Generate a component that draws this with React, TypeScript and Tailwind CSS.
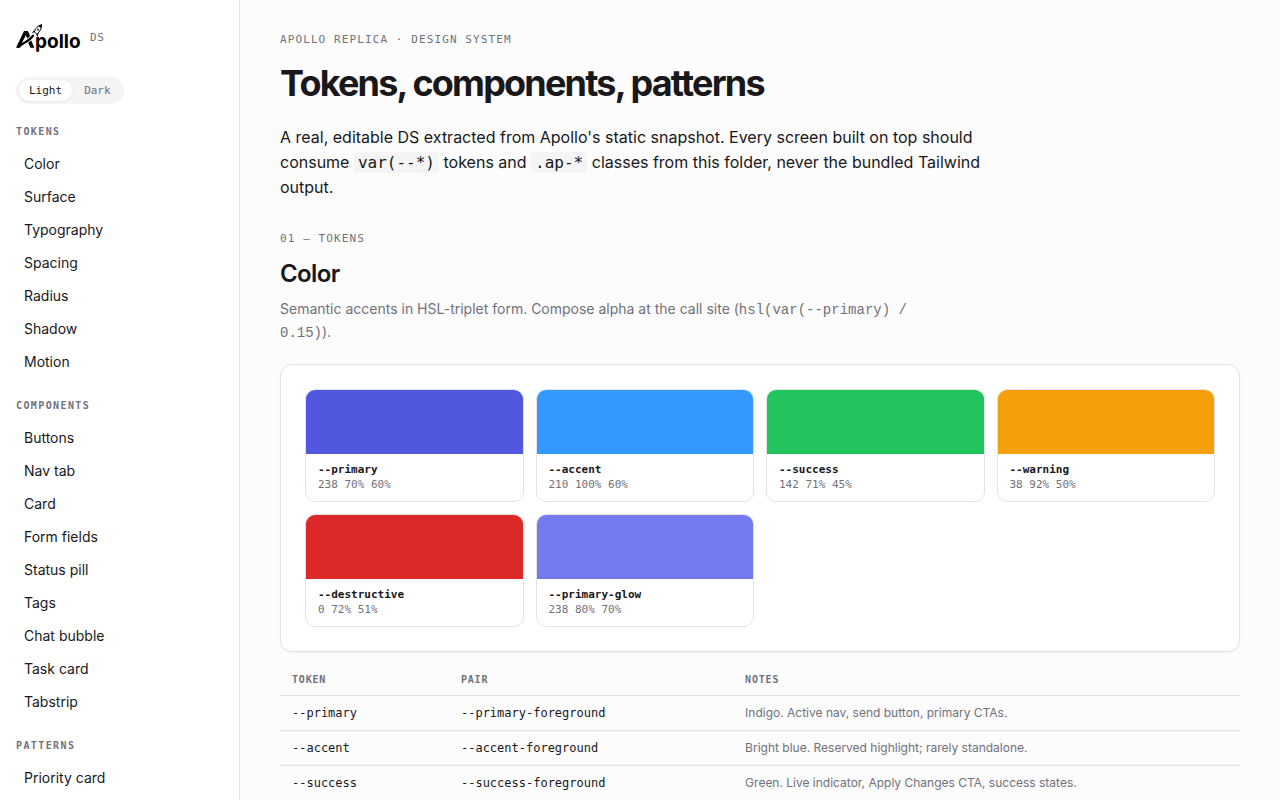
import { useState } from "react";

const mono = "font-['DejaVu_Sans_Mono',monospace]";

const navGroups = [
  {
    title: "Tokens",
    items: ["Color", "Surface", "Typography", "Spacing", "Radius", "Shadow", "Motion"],
  },
  {
    title: "Components",
    items: ["Buttons", "Nav tab", "Card", "Form fields", "Status pill", "Tags", "Chat bubble", "Task card", "Tabstrip"],
  },
  {
    title: "Patterns",
    items: ["Priority card"],
  },
];

const swatches = [
  { name: "--primary", value: "238 70% 60%", color: "bg-[#5257e0]" },
  { name: "--accent", value: "210 100% 60%", color: "bg-[#3399ff]" },
  { name: "--success", value: "142 71% 45%", color: "bg-[#21c45d]" },
  { name: "--warning", value: "38 92% 50%", color: "bg-[#f59f0a]" },
  { name: "--destructive", value: "0 72% 51%", color: "bg-[#dc2828]" },
  { name: "--primary-glow", value: "238 80% 70%", color: "bg-[#757af0]" },
];

const tokens = [
  { token: "--primary", pair: "--primary-foreground", notes: "Indigo. Active nav, send button, primary CTAs." },
  { token: "--accent", pair: "--accent-foreground", notes: "Bright blue. Reserved highlight; rarely standalone." },
  { token: "--success", pair: "--success-foreground", notes: "Green. Live indicator, Apply Changes CTA, success states." },
];

const Logo = () => (
  <svg viewBox="0 0 67 28" className="h-7 w-[67px] text-black" fill="currentColor" role="img" aria-label="Apollo">
    {/* left leg and apex */}
    <path d="M0 23.8 8 7h3.800l2.400 5-2.900 2.600-1.500-3.400L6.600 17.800 3.600 23.800Z" />
    {/* exhaust trail */}
    <path d="M1.500 23.800C4.500 18.500 11 17.500 16.800 10.300l1.700 1.400C13.500 18.800 7.500 19 3.600 23.800Z" />
    {/* right leg */}
    <path d="M12.200 18.800 15.200 16.400 18.400 23.800H14.400Z" />
    {/* rocket */}
    <path
      d="M18.300 8C19.300 4.300 22 1.600 25.600.7 25.700 4.300 24 7.600 20.900 10Z"
      fill="white"
      stroke="currentColor"
      strokeWidth="1"
      strokeLinejoin="round"
    />
    <path d="M22.600 2.400C23.600 1.400 24.700.7 26 .2c.1 1.500-.1 2.600-.5 3.900Z" />
    <circle cx="22" cy="5.700" r=".9" />
    <path d="M18.700 5.600 15.800 8.900l2-.4ZM22.700 9l-1.300 4.200-1-2.400Z" />
    <text x="19" y="24" fontSize="19" className="font-['Inter',sans-serif] font-bold">pollo</text>
  </svg>
);

const Sidebar = () => {
  const [theme, setTheme] = useState("Light");

  return (
    <aside className="w-60 shrink-0 border-r border-[#e4e4e7] bg-white px-4 pt-6">
      <div className="flex items-center gap-[7px]">
        <Logo />
        <span className={`${mono} text-[11px] leading-4 tracking-wider text-[#71717a]`}>DS</span>
      </div>
      <div className={`${mono} mt-[25px] flex w-fit gap-[2px] rounded-full bg-[#f4f4f5] p-[3px] text-[11px] leading-[13px]`}>
        {["Light", "Dark"].map((name) => (
          <button
            key={name}
            onClick={() => setTheme(name)}
            className={`rounded-full px-[10px] py-1 ${theme === name ? "bg-white text-[#18181b] shadow-xs" : "text-[#71717a]"}`}
          >
            {name}
          </button>
        ))}
      </div>
      <nav>
        {navGroups.map((group) => (
          <div key={group.title} className="mt-5">
            <h4 className={`${mono} mb-2 text-[10px] leading-[15px] font-bold tracking-[0.14em] text-[#71717a] uppercase`}>
              {group.title}
            </h4>
            {group.items.map((item) => (
              <a key={item} href="#" className="block rounded-md px-2 py-[6px] text-sm leading-[21px] hover:bg-[#f4f4f5]">
                {item}
              </a>
            ))}
          </div>
        ))}
      </nav>
    </aside>
  );
};

const ColorSection = () => (
  <section className="mt-[31px]">
    <p className={`${mono} text-[11px] leading-4 tracking-widest text-[#71717a] uppercase`}>01 — Tokens</p>
    <h2 className="mt-[11px] text-2xl leading-8 font-semibold tracking-tight">Color</h2>
    <p className="mt-2 max-w-[640px] text-sm leading-[22px] text-[#71717a]">
      Semantic accents in HSL-triplet form. Compose alpha at the call site (
      <code className="font-['Liberation_Mono',monospace]">hsl(var(--primary) / 0.15)</code>).
    </p>

    <div className="mt-5 grid grid-cols-4 gap-3 rounded-xl border border-[#e4e4e7] bg-white p-6 shadow-xs">
      {swatches.map((s) => (
        <div key={s.name} className="overflow-hidden rounded-[10px] border border-[#e4e4e7]">
          <div className={`h-16 ${s.color}`} />
          <div className={`${mono} px-3 pt-2 pb-[9px] text-[11px] leading-[15px]`}>
            <div className="font-bold">{s.name}</div>
            <div className="text-[#71717a]">{s.value}</div>
          </div>
        </div>
      ))}
    </div>

    <table className="mt-3 w-full table-fixed text-left text-xs leading-[18px]">
      <colgroup>
        <col className="w-[17.6%]" />
        <col className="w-[29.6%]" />
        <col />
      </colgroup>
      <thead>
        <tr className={`${mono} border-b border-[#e4e4e7] text-[10px] leading-[15px] tracking-[0.08em] text-[#71717a] uppercase`}>
          <th className="px-3 py-2">Token</th>
          <th className="px-3 py-2">Pair</th>
          <th className="px-3 py-2">Notes</th>
        </tr>
      </thead>
      <tbody>
        {tokens.map((row) => (
          <tr key={row.token} className="border-b border-[#e4e4e7]">
            <td className={`${mono} px-3 py-2`}>{row.token}</td>
            <td className={`${mono} px-3 py-2`}>{row.pair}</td>
            <td className="px-3 py-2 text-[#71717a]">{row.notes}</td>
          </tr>
        ))}
      </tbody>
    </table>
  </section>
);

export default function App() {
  return (
    <div className="flex h-screen overflow-hidden bg-[#fcfcfc] font-['Inter',sans-serif] text-[#18181b]">
      <Sidebar />
      <main className="min-w-0 flex-1 px-10 pt-8">
        <p className={`${mono} text-[11px] leading-4 tracking-widest text-[#71717a] uppercase`}>
          Apollo replica · Design system
        </p>
        <h1 className="mt-[11px] text-4xl leading-[48px] font-bold tracking-tighter">Tokens, components, patterns</h1>
        <p className="mt-[18px] max-w-[720px] text-base leading-[25px]">
          A real, editable DS extracted from Apollo's static snapshot. Every screen built on top should consume{" "}
          <code className={`${mono} rounded-sm bg-[#f4f4f5] px-1 py-px`}>var(--*)</code> tokens and{" "}
          <code className={`${mono} rounded-sm bg-[#f4f4f5] px-1 py-px`}>.ap-*</code> classes from this folder, never the
          bundled Tailwind output.
        </p>
        <ColorSection />
      </main>
    </div>
  );
}
